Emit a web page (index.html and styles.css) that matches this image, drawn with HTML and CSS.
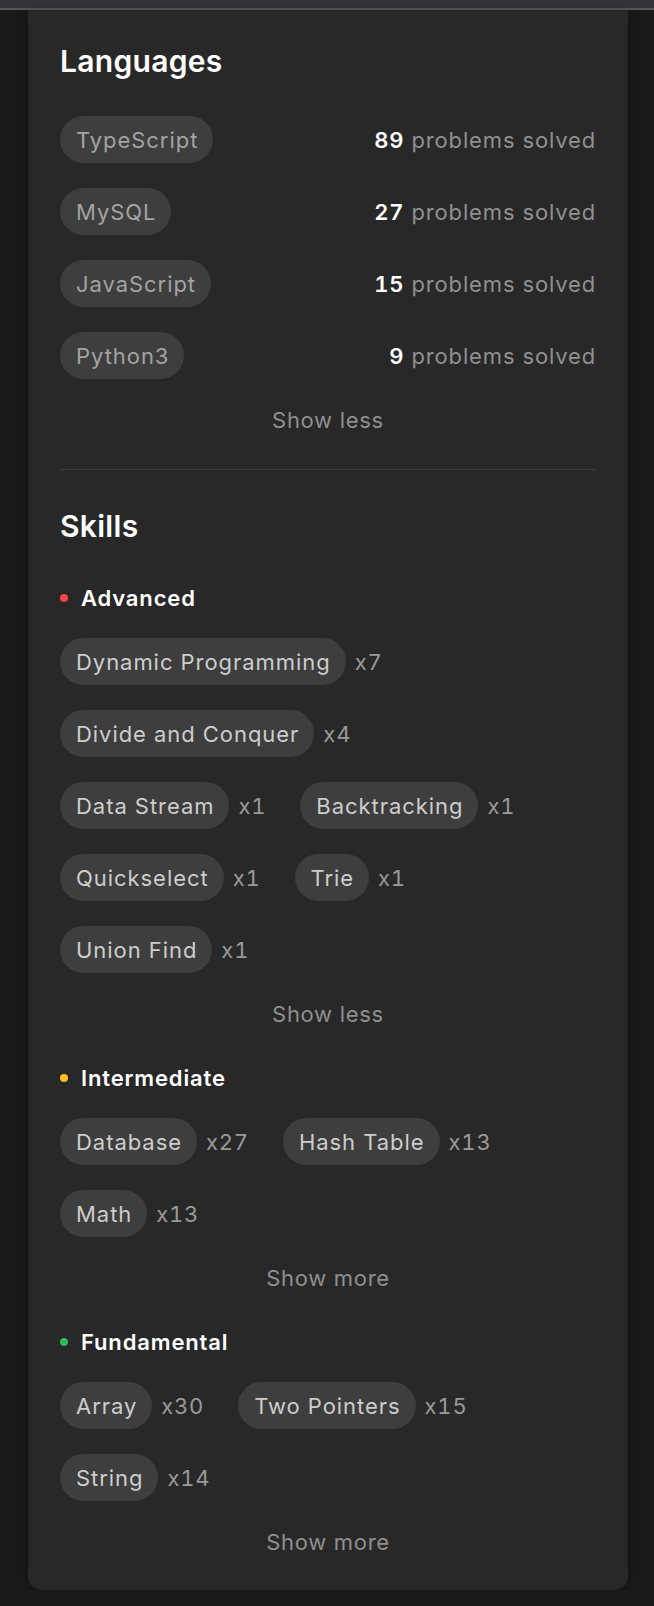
FILE: index.html
```html
<!DOCTYPE html>
<html lang="en">
<head>
<meta charset="utf-8">
<title>Languages and Skills</title>
<link rel="stylesheet" href="styles.css">
</head>
<body>
<div class="topbar"></div>
<div class="card">
  <section class="langs">
    <h2 class="title">Languages</h2>
    <div class="lang-list">
      <div class="lang-row"><span class="pill pill-lang">TypeScript</span><span class="solved"><b>89</b> problems solved</span></div>
      <div class="lang-row"><span class="pill pill-lang">MySQL</span><span class="solved"><b>27</b> problems solved</span></div>
      <div class="lang-row"><span class="pill pill-lang">JavaScript</span><span class="solved"><b>15</b> problems solved</span></div>
      <div class="lang-row"><span class="pill pill-lang">Python3</span><span class="solved"><b>9</b> problems solved</span></div>
    </div>
    <div class="toggle">Show less</div>
  </section>
  <hr class="divider">
  <section class="skills">
    <h2 class="title">Skills</h2>

    <div class="level"><span class="dot dot-adv"></span>Advanced</div>
    <div class="tags">
      <div class="tag"><span class="pill">Dynamic Programming</span><span class="count">x7</span></div>
      <div class="tag"><span class="pill">Divide and Conquer</span><span class="count">x4</span></div>
      <div class="tag"><span class="pill">Data Stream</span><span class="count">x1</span></div>
      <div class="tag"><span class="pill">Backtracking</span><span class="count">x1</span></div>
      <div class="tag"><span class="pill">Quickselect</span><span class="count">x1</span></div>
      <div class="tag"><span class="pill">Trie</span><span class="count">x1</span></div>
      <div class="tag"><span class="pill">Union Find</span><span class="count">x1</span></div>
    </div>
    <div class="toggle">Show less</div>

    <div class="level level-next"><span class="dot dot-int"></span>Intermediate</div>
    <div class="tags">
      <div class="tag"><span class="pill">Database</span><span class="count">x27</span></div>
      <div class="tag"><span class="pill">Hash Table</span><span class="count">x13</span></div>
      <div class="tag"><span class="pill">Math</span><span class="count">x13</span></div>
    </div>
    <div class="toggle">Show more</div>

    <div class="level level-next"><span class="dot dot-fun"></span>Fundamental</div>
    <div class="tags">
      <div class="tag"><span class="pill">Array</span><span class="count">x30</span></div>
      <div class="tag"><span class="pill">Two Pointers</span><span class="count">x15</span></div>
      <div class="tag"><span class="pill">String</span><span class="count">x14</span></div>
    </div>
    <div class="toggle">Show more</div>
  </section>
</div>
</body>
</html>
```

FILE: styles.css
```css
html, body {
  margin: 0;
  padding: 0;
  background: #1a1a1a;
  font-family: Inter, "Noto Sans", "Liberation Sans", sans-serif;
}

.topbar {
  height: 8px;
  background: #333438;
  border-bottom: 2px solid #55575b;
}

.card {
  width: 600px;
  margin-left: 28px;
  box-sizing: border-box;
  padding: 33px 32px 33px 32px;
  background: #282828;
  border-radius: 0 0 14px 14px;
  box-shadow: 0 2px 8px rgba(0, 0, 0, 0.35);
}

.title {
  margin: 0;
  font-size: 30px;
  line-height: 36px;
  font-weight: 600;
  letter-spacing: 0.3px;
  color: #ffffff;
}

.lang-list {
  margin-top: 37px;
  display: flex;
  flex-direction: column;
  gap: 25px;
}

.lang-row {
  display: flex;
  justify-content: space-between;
  align-items: center;
}

.pill {
  display: inline-flex;
  align-items: center;
  height: 47px;
  padding: 0 15px 0 16px;
  border-radius: 24px;
  background: #3e3e3e;
  color: #cdcdcd;
  font-size: 22px;
  letter-spacing: 0.95px;
  white-space: nowrap;
}

.pill-lang {
  color: #a3a3a3;
}

.solved {
  font-size: 22px;
  letter-spacing: 0.85px;
  color: #909090;
}

.solved b {
  color: #ffffff;
  font-weight: 600;
  font-variant-numeric: tabular-nums;
}

.toggle {
  margin-top: 26px;
  text-align: center;
  font-size: 22px;
  line-height: 30px;
  letter-spacing: 0.7px;
  color: #8f8f8f;
}

.divider {
  margin: 34px 0 0 0;
  border: 0;
  height: 1px;
  background: #3d3d3d;
}

.skills .title {
  margin-top: 38px;
}

.level {
  margin-top: 39px;
  display: flex;
  align-items: center;
  font-size: 22px;
  line-height: 30px;
  font-weight: 600;
  letter-spacing: 0.85px;
  color: #ffffff;
}

.level-next {
  margin-top: 34px;
}

.dot {
  width: 8px;
  height: 8px;
  border-radius: 50%;
  margin-right: 13px;
}

.dot-adv { background: #ef4743; }
.dot-int { background: #ffc01e; }
.dot-fun { background: #2cbb5d; }

.tags {
  margin-top: 25px;
  display: flex;
  flex-wrap: wrap;
  row-gap: 25px;
}

.tag {
  display: flex;
  align-items: center;
  gap: 9px;
  margin-right: 34px;
}

.count {
  font-size: 22px;
  letter-spacing: 0.8px;
  font-variant-numeric: tabular-nums;
  color: #999999;
}
```
